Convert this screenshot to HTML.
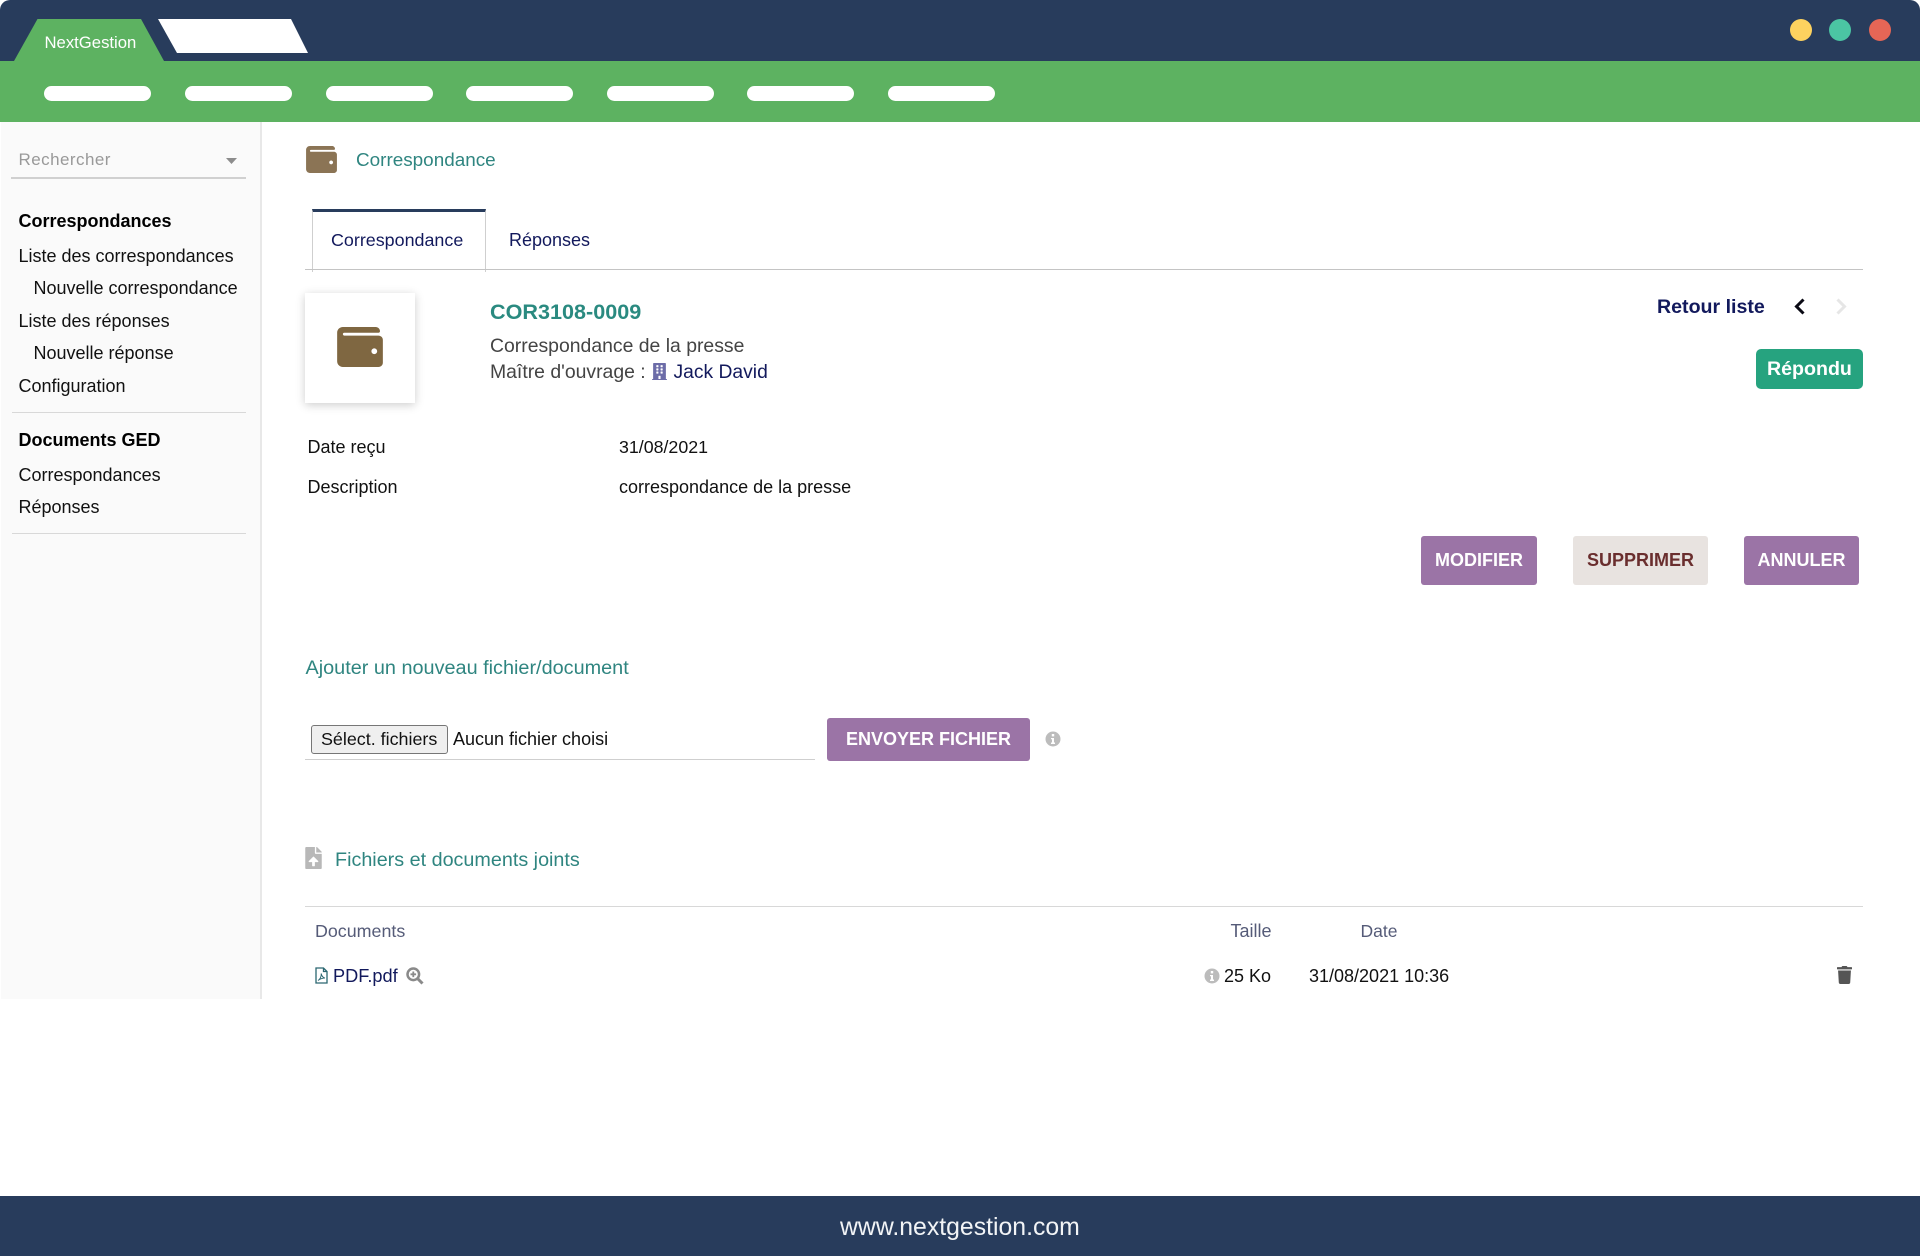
<!DOCTYPE html>
<html lang="fr"><head><meta charset="utf-8"><title>NextGestion</title>
<style>
html,body{margin:0;padding:0;background:#fff}
#p{position:relative;width:1920px;height:1256px;overflow:hidden;background:#fff;font-family:"Liberation Sans",Arial,sans-serif;color:#111}
#p div,#p span.t,#p svg{position:absolute}
.t{white-space:nowrap;line-height:24px;height:24px;font-size:18px}
.b{font-weight:700}
.teal{color:#2f8580}
.nav{color:#12195c}
.pill{top:86px;height:15px;width:107px;border-radius:8px;background:#fff}
.dot{top:19px;width:22px;height:22px;border-radius:50%}
.btn{border-radius:3px}
.ln{background:#d8d8d8;height:1px}
</style></head><body><div id="p">
<div style="left:0;top:0;width:1920px;height:122px;border-radius:10px 10px 0 0;overflow:hidden;background:#283c5c">
<div style="left:0;top:61px;width:1920px;height:61px;background:#5db261"></div>
<svg style="left:0;top:0" width="320" height="61"><polygon points="14,61 37.5,19 141,19 164,61" fill="#5db261"/><polygon points="158,19 291,19 308,53 177,53" fill="#fff"/></svg>
<span class="t" style="left:44.5px;top:31px;font-size:16.7px;color:#fff">NextGestion</span>
<div class="pill" style="left:44px"></div><div class="pill" style="left:185px"></div><div class="pill" style="left:326px"></div><div class="pill" style="left:466px"></div><div class="pill" style="left:607px"></div><div class="pill" style="left:747px"></div><div class="pill" style="left:888px"></div>
<div class="dot" style="left:1790px;background:#fdd25f"></div><div class="dot" style="left:1829px;background:#4bc5a3"></div><div class="dot" style="left:1869px;background:#e66656"></div>
</div>

<div style="left:1px;top:122px;width:259px;height:877px;background:#fafafa;border-right:2px solid #e8e8e8"></div>
<span class="t" style="left:18.5px;top:148px;font-size:17px;letter-spacing:.45px;color:#999">Rechercher</span>
<svg style="left:226px;top:158px" width="11" height="6"><polygon points="0,0 11,0 5.500,6" fill="#8c8c8c"/></svg>
<div style="left:11px;top:177px;width:235px;height:2px;background:#d0d0d0"></div>
<span class="t b" style="left:18.5px;top:209px;color:#000">Correspondances</span>
<span class="t" style="left:18.5px;top:244px">Liste des correspondances</span>
<span class="t" style="left:33.5px;top:276px">Nouvelle correspondance</span>
<span class="t" style="left:18.5px;top:309px">Liste des réponses</span>
<span class="t" style="left:33.5px;top:341px">Nouvelle réponse</span>
<span class="t" style="left:18.5px;top:374px">Configuration</span>
<div class="ln" style="left:12px;top:412px;width:234px"></div>
<span class="t b" style="left:18.5px;top:428px;color:#000">Documents GED</span>
<span class="t" style="left:18.5px;top:463px">Correspondances</span>
<span class="t" style="left:18.5px;top:495px">Réponses</span>
<div class="ln" style="left:12px;top:533px;width:234px"></div>

<svg style="left:306px;top:146px" width="31" height="27" viewBox="0 32 512 448"><path fill="#8b7455" d="M461.2 128H80c-8.84 0-16-7.16-16-16s7.16-16 16-16h384c8.84 0 16-7.16 16-16 0-26.51-21.49-48-48-48H64C28.65 32 0 60.65 0 96v320c0 35.35 28.65 64 64 64h397.2c28.02 0 50.8-21.53 50.8-48V176c0-26.47-22.78-48-50.8-48zM416 336c-17.67 0-32-14.33-32-32s14.33-32 32-32 32 14.33 32 32-14.33 32-32 32z"/></svg>
<span class="t teal" style="left:356px;top:149px;font-size:18.9px">Correspondance</span>

<div style="left:312px;top:209px;width:172px;height:60px;border:1px solid #cfcfcf;border-top:3px solid #283c5c;border-bottom:0"></div>
<span class="t nav" style="left:331px;top:228px;font-size:17.9px">Correspondance</span>
<span class="t nav" style="left:509px;top:228px">Réponses</span>
<div style="left:305px;top:269px;width:1558px;height:1px;background:#c4c4c4"></div>

<div style="left:305px;top:293px;width:110px;height:110px;background:#fff;box-shadow:0 2px 9px rgba(0,0,0,.2)"></div>
<svg style="left:337px;top:327px" width="46" height="40" viewBox="0 32 512 448"><path fill="#7f6741" d="M461.2 128H80c-8.84 0-16-7.16-16-16s7.16-16 16-16h384c8.84 0 16-7.16 16-16 0-26.51-21.49-48-48-48H64C28.65 32 0 60.65 0 96v320c0 35.35 28.65 64 64 64h397.2c28.02 0 50.8-21.53 50.8-48V176c0-26.47-22.78-48-50.8-48zM416 336c-17.67 0-32-14.33-32-32s14.33-32 32-32 32 14.33 32 32-14.33 32-32 32z"/></svg>
<span class="t b" style="left:490px;top:300px;font-size:21.6px;color:#2a8a80">COR3108-0009</span>
<span class="t" style="left:490px;top:334px;font-size:19.4px;color:#444">Correspondance de la presse</span>
<span class="t" style="left:490px;top:360px;font-size:19.4px;color:#444">Maître d'ouvrage :</span>
<svg style="left:652px;top:363px" width="15" height="17" viewBox="0 0 448 512"><path fill="#6c6ca8" d="M436 480h-20V24c0-13.255-10.745-24-24-24H56C42.745 0 32 10.745 32 24v456H12c-6.627 0-12 5.373-12 12v20h448v-20c0-6.627-5.373-12-12-12zM128 76c0-6.627 5.373-12 12-12h40c6.627 0 12 5.373 12 12v40c0 6.627-5.373 12-12 12h-40c-6.627 0-12-5.373-12-12V76zm0 96c0-6.627 5.373-12 12-12h40c6.627 0 12 5.373 12 12v40c0 6.627-5.373 12-12 12h-40c-6.627 0-12-5.373-12-12v-40zm52 148h-40c-6.627 0-12-5.373-12-12v-40c0-6.627 5.373-12 12-12h40c6.627 0 12 5.373 12 12v40c0 6.627-5.373 12-12 12zm76 160h-64v-84c0-6.627 5.373-12 12-12h40c6.627 0 12 5.373 12 12v84zm64-172c0 6.627-5.373 12-12 12h-40c-6.627 0-12-5.373-12-12v-40c0-6.627 5.373-12 12-12h40c6.627 0 12 5.373 12 12v40zm0-96c0 6.627-5.373 12-12 12h-40c-6.627 0-12-5.373-12-12v-40c0-6.627 5.373-12 12-12h40c6.627 0 12 5.373 12 12v40zm0-96c0 6.627-5.373 12-12 12h-40c-6.627 0-12-5.373-12-12V76c0-6.627 5.373-12 12-12h40c6.627 0 12 5.373 12 12v40z"/></svg>
<span class="t nav" style="left:673.5px;top:361px;font-size:19.3px">Jack David</span>

<span class="t b nav" style="left:1657px;top:295px;font-size:19.6px">Retour liste</span>
<svg style="left:1794px;top:298px" width="11" height="17" viewBox="0 0 11 17"><path d="M9.5 1.5 2.5 8.5l7 7" fill="none" stroke="#0a0a14" stroke-width="3"/></svg>
<svg style="left:1836px;top:298px" width="11" height="17" viewBox="0 0 11 17"><path d="M1.5 1.5 8.5 8.5l-7 7" fill="none" stroke="#e6e6e6" stroke-width="3"/></svg>
<div style="left:1756px;top:349px;width:107px;height:40px;border-radius:5px;background:#26a37f"></div>
<span class="t b" style="left:1767px;top:357px;font-size:19.6px;color:#fff">Répondu</span>

<span class="t" style="left:307.5px;top:435px;color:#111">Date reçu</span>
<span class="t" style="left:619px;top:435px;font-size:17.8px">31/08/2021</span>
<span class="t" style="left:307.5px;top:475px;color:#111">Description</span>
<span class="t" style="left:619px;top:475px">correspondance de la presse</span>

<div class="btn" style="left:1421px;top:536px;width:116px;height:49px;background:#9b74a6"></div>
<span class="t b" style="left:1435px;top:548px;color:#fff">MODIFIER</span>
<div class="btn" style="left:1573px;top:536px;width:135px;height:49px;background:#e8e3e0"></div>
<span class="t b" style="left:1587px;top:548px;color:#6a2e2e">SUPPRIMER</span>
<div class="btn" style="left:1744px;top:536px;width:115px;height:49px;background:#9b74a6"></div>
<span class="t b" style="left:1757.5px;top:548px;color:#fff">ANNULER</span>

<span class="t teal" style="left:305.5px;top:656px;font-size:19.85px">Ajouter un nouveau fichier/document</span>
<div style="left:311px;top:725px;width:135px;height:27px;background:#efefef;border:1px solid #767676;border-radius:3px"></div>
<span class="t" style="left:321px;top:727px;font-size:17.9px">Sélect. fichiers</span>
<span class="t" style="left:453px;top:727px">Aucun fichier choisi</span>
<div style="left:305px;top:759px;width:510px;height:1px;background:#cfcfcf"></div>
<div class="btn" style="left:827px;top:718px;width:203px;height:43px;background:#9b74a6"></div>
<span class="t b" style="left:846px;top:727px;color:#fff">ENVOYER FICHIER</span>
<svg style="left:1045px;top:731px" width="16" height="16" viewBox="0 0 16 16"><circle cx="8" cy="8" r="7.5" fill="#bcbcbc"/><rect x="6.8" y="3" width="2.4" height="2.4" fill="#fff"/><path d="M6 7h3v4.5h1V13H6v-1.500h1V8.200H6z" fill="#fff"/></svg>

<svg style="left:305px;top:847px" width="17" height="22" viewBox="0 0 384 512"><path fill="#b8b8b8" d="M224 136V0H24C10.7 0 0 10.7 0 24v464c0 13.3 10.7 24 24 24h336c13.3 0 24-10.7 24-24V160H248c-13.2 0-24-10.8-24-24zm65.18 216.01H224v80c0 8.84-7.16 16-16 16h-32c-8.84 0-16-7.16-16-16v-80H94.82c-14.28 0-21.41-17.29-11.27-27.36l96.42-95.7c6.65-6.61 17.39-6.61 24.04 0l96.42 95.7c10.15 10.07 3.03 27.36-11.25 27.36zM377 105L279.1 7c-4.5-4.5-10.6-7-17-7H256v128h128v-6.1c0-6.3-2.5-12.4-7-16.9z"/></svg>
<span class="t teal" style="left:335px;top:848px;font-size:19.75px">Fichiers et documents joints</span>
<div class="ln" style="left:305px;top:906px;width:1558px"></div>

<span class="t" style="left:315px;top:919px;font-size:17.85px;color:#555b78">Documents</span>
<span class="t" style="left:1230.5px;top:919px;font-size:18px;color:#555b78">Taille</span>
<span class="t" style="left:1360.5px;top:919px;font-size:17.5px;color:#555b78">Date</span>

<svg style="left:315px;top:967px" width="13" height="17" viewBox="0 0 13 17"><path d="M1 1h7.500L12 4.500V16H1z M8.500 1v3.500H12" fill="none" stroke="#2a6670" stroke-width="1.300"/><path d="M3 13.500c2-1 3.500-4 3.200-7 .5 2.500 1.500 4 3.800 4.600-2.200-.1-4.500.6-7 2.400z" fill="none" stroke="#2a6670" stroke-width=".9"/></svg>
<span class="t nav" style="left:333px;top:964px;font-size:18.2px">PDF.pdf</span>
<svg style="left:406px;top:967px" width="18" height="18" viewBox="0 0 18 18"><circle cx="7.300" cy="7.300" r="5.800" fill="none" stroke="#8a8a8a" stroke-width="2.500"/><path d="M11.500 11.500 16.500 16.500" stroke="#8a8a8a" stroke-width="3"/><path d="M7.300 4.500v5.600M4.500 7.300h5.600" stroke="#8a8a8a" stroke-width="1.800"/></svg>
<svg style="left:1204px;top:968px" width="16" height="16" viewBox="0 0 16 16"><circle cx="8" cy="8" r="7.500" fill="#bcbcbc"/><rect x="6.800" y="3" width="2.400" height="2.400" fill="#fff"/><path d="M6 7h3v4.500h1V13H6v-1.500h1V8.200H6z" fill="#fff"/></svg>
<span class="t" style="left:1224px;top:964px">25 Ko</span>
<span class="t" style="left:1309px;top:964px">31/08/2021 10:36</span>
<svg style="left:1837px;top:966px" width="15" height="18" viewBox="0 0 448 512" preserveAspectRatio="none"><path fill="#555" d="M432 32H312l-9.400-18.700A24 24 0 0 0 281.100 0H166.800a23.720 23.720 0 0 0-21.400 13.300L136 32H16A16 16 0 0 0 0 48v32a16 16 0 0 0 16 16h416a16 16 0 0 0 16-16V48a16 16 0 0 0-16-16zM53.200 467a48 48 0 0 0 47.900 45h245.800a48 48 0 0 0 47.900-45L416 128H32z"/></svg>

<div style="left:0;top:1196px;width:1920px;height:60px;background:#283c5c"></div>
<span class="t" style="left:840px;top:1216px;font-size:24.8px;color:#f2f4f6">www.nextgestion.com</span>
</div></body></html>
